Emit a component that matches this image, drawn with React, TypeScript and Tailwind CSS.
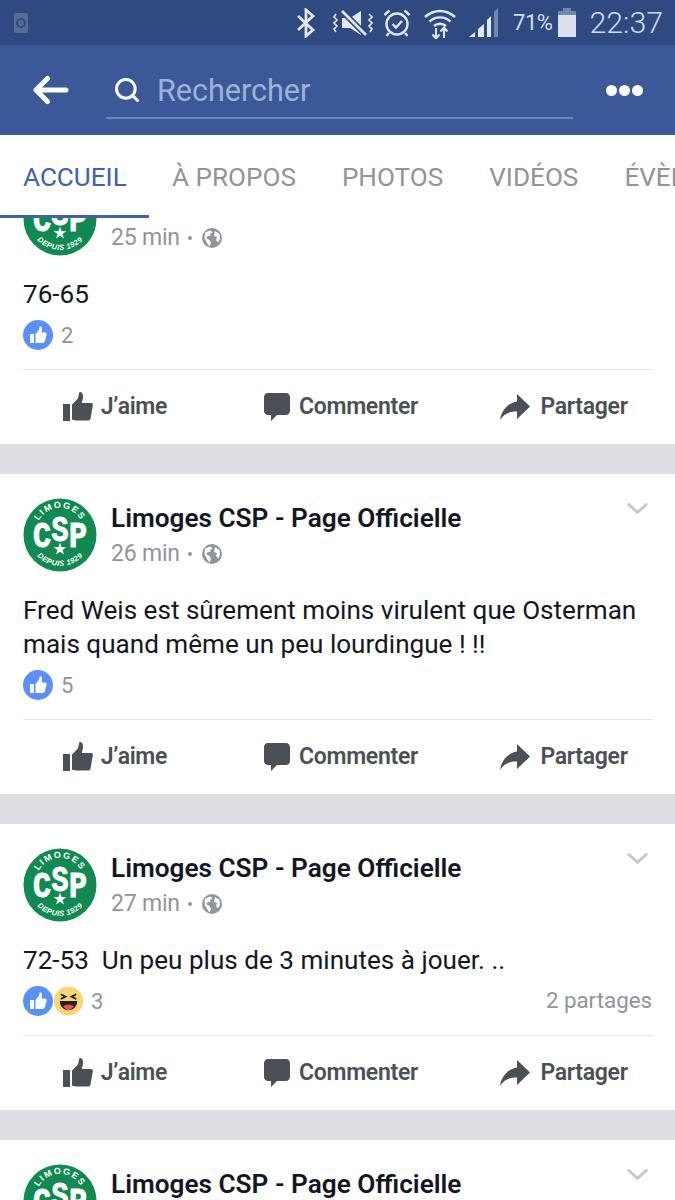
import { Search } from 'lucide-react';

function CspLogo() {
  return (
    <svg viewBox="0 0 74 74" className="h-[74px] w-[74px] shrink-0">
      <defs>
        <path id="arcTop" d="M13 34 A24 24 0 0 1 61 34" />
        <path id="arcBottom" d="M6 42 A31.500 31.500 0 0 0 68 42" />
      </defs>
      <circle cx="37" cy="37" r="36.500" fill="#0f8a50" />
      <text fontFamily="Liberation Sans, sans-serif" fontWeight="700" fontSize="9" fill="#fff" letterSpacing="1.500">
        <textPath href="#arcTop" startOffset="50%" textAnchor="middle">LIMOGES</textPath>
      </text>
      <g fontFamily="Liberation Mono, monospace" fontWeight="700" fontSize="36" fill="#fff" stroke="#fff" strokeWidth="1">
        <text x="10" y="49" textLength="18" lengthAdjust="spacingAndGlyphs">C</text>
        <text x="28.500" y="43" textLength="17" lengthAdjust="spacingAndGlyphs">S</text>
        <text x="46" y="49" textLength="18" lengthAdjust="spacingAndGlyphs">P</text>
      </g>
      <polygon points="37,44.500 38.500,49 43.500,49 39.500,52 41,56.500 37,53.800 33,56.500 34.500,52 30.500,49 35.500,49" fill="#fff" />
      <text fontFamily="Liberation Sans, sans-serif" fontWeight="700" fontStyle="italic" fontSize="7.500" fill="#fff" letterSpacing="0.400">
        <textPath href="#arcBottom" startOffset="50%" textAnchor="middle">DEPUIS 1929</textPath>
      </text>
    </svg>
  );
}

function Globe() {
  return (
    <svg viewBox="0 0 20 20" className="h-[20px] w-[20px]">
      <circle cx="10" cy="10" r="10" fill="#90949c" />
      <path d="M3 4.500L8.500 2.500 10.500 4.500 8 6l.5 2h-3l-1 2.500 3 1.500 1.500 3-1.500 3.500L5 15 2.500 10z" fill="#fff" />
      <path d="M13 3l4.500 3 .5 5-2 3.500-2-2.500 1-3-3-1z" fill="#fff" />
    </svg>
  );
}

function ThumbBlue() {
  return (
    <svg viewBox="0 0 30 30" className="relative z-10 h-[30px] w-[30px] shrink-0">
      <circle cx="15" cy="15" r="15" fill="#5890ff" />
      <path d="M7 14h4v9H7z M12.500 14l3-3.500c.8-1 .8-3 1.200-4.200 1.800-.3 2.600 1.500 2.300 3.500l-.5 2.700h3.500c1.400 0 2 1.200 1.600 2.300l-1.800 6.500c-.3 1-1 1.700-2 1.700h-7.300z" fill="#fff" />
    </svg>
  );
}

function LaughEmoji() {
  return (
    <svg viewBox="0 0 30 30" className="ml-px h-[30px] w-[29px] shrink-0">
      <ellipse cx="15" cy="15" rx="15" ry="15" fill="#f7d774" />
      <path d="M7 8l5 2.500-5 2.500M23 8l-5 2.500 5 2.500" fill="none" stroke="#1d2129" strokeWidth="1.800" />
      <path d="M6 15h18c0 5.500-4 9.500-9 9.500S6 20.500 6 15z" fill="#2a1c22" />
      <path d="M9.500 20.500c3-2 8-2 11 0-1.500 2.500-3.500 4-5.500 4s-4-1.500-5.500-4z" fill="#ed4f58" />
    </svg>
  );
}

function ActionThumb() {
  return (
    <svg viewBox="0 0 30 30" className="h-[30px] w-[30px] shrink-0" fill="#4b4f56">
      <path d="M0 12h7v17H0z" />
      <path d="M9 12.500l5.500-5.500c1-1.500 1-4.500 2-7 2.500-.5 4 2.500 3.500 6l-1.200 5H28c1.500 0 2 1.200 1.800 2.500l-2.300 13c-.3 1.500-1.200 2-2.500 2H13c-2 0-4-1-4-1z" />
    </svg>
  );
}

function ActionComment() {
  return (
    <svg viewBox="0 0 26 28" className="h-[28px] w-[26px] shrink-0" fill="#4b4f56">
      <path d="M4 0h18c2.200 0 4 1.800 4 4v14c0 2.200-1.800 4-4 4H13l-6 6v-6H4c-2.200 0-4-1.800-4-4V4c0-2.200 1.800-4 4-4z" />
    </svg>
  );
}

function ActionShare() {
  return (
    <svg viewBox="0 0 30 26" className="h-[30px] w-[30px] shrink-0" fill="#4b4f56">
      <path d="M17 0l13 12.500L17 25v-7.500C9 17.500 4 20 0 26c1.500-9.500 7.500-17 17-18.500z" />
    </svg>
  );
}

function Actions() {
  return (
    <div className="grid h-[74px] grid-cols-3 pl-[3px] text-[23px] font-semibold tracking-[-0.3px] text-[#4b4f56]">
      <div className="flex items-center justify-center gap-[8px]">
        <ActionThumb />
        <span>J’aime</span>
      </div>
      <div className="flex items-center justify-center gap-[9px] pl-[4px]">
        <ActionComment />
        <span>Commenter</span>
      </div>
      <div className="flex items-center justify-center gap-[10px] pl-[2px]">
        <ActionShare />
        <span>Partager</span>
      </div>
    </div>
  );
}

interface PostProps {
  time: string;
  lines: string[];
  likes: string;
  haha?: boolean;
  shares?: string;
}

function Post({ time, lines, likes, haha, shares }: PostProps) {
  return (
    <div className="mb-[30px] bg-white">
      <div className="relative flex gap-[14px] px-[23px] pt-[24px]">
        <CspLogo />
        <div className="pt-[5px]">
          <div className="text-[26.200px] leading-[30px] font-semibold whitespace-nowrap text-[#14171f]">Limoges CSP - Page Officielle</div>
          <div className="mt-[7px] flex items-center text-[23px] leading-[28px] tracking-[-0.2px] text-[#90949c]">
            <span>{time}</span>
            <span className="ml-[8px] h-[4px] w-[4px] rounded-full bg-[#90949c]" />
            <span className="ml-[10px]">
              <Globe />
            </span>
          </div>
        </div>
        <svg viewBox="0 0 22 12" className="absolute top-[28px] right-[27px] h-[12px] w-[21px]" fill="none" stroke="#c4c6cc" strokeWidth="3">
          <path d="M1 1.500l10 9 10-9" />
        </svg>
      </div>
      <div className="mt-[21px] px-[23px] text-[26.100px] leading-[34px] whitespace-pre text-[#14171f]">
        {lines.map((line) => (
          <div key={line}>{line}</div>
        ))}
      </div>
      <div className="mx-[23px] mt-[7px] flex h-[34px] items-center text-[22px] text-[#90949c]">
        <ThumbBlue />
        {haha && <LaughEmoji />}
        <span className="ml-[8px]">{likes}</span>
        {shares && <span className="ml-auto text-[22.300px]">{shares}</span>}
      </div>
      <div className="mx-[23px] mt-[17px] border-t border-[#e2e3e6]" />
      <Actions />
    </div>
  );
}

export default function App() {
  return (
    <div className="flex h-[1200px] w-[675px] flex-col overflow-hidden bg-[#dcdee3] font-['Roboto',sans-serif]">
      {/* status bar */}
      <div className="flex h-[45px] shrink-0 items-center bg-[#2e4a80] pr-[12px] pl-[14px] text-[#d5dbe8]">
        <div className="flex h-[20px] w-[14px] items-center justify-center rounded-[2px] bg-[#5a6c90]">
          <div className="h-[10px] w-[10px] rounded-full border-2 border-[#2e4a80]" />
        </div>
        <div className="ml-auto flex items-center">
          <svg viewBox="0 0 20 30" className="h-[30px] w-[20px]" fill="none" stroke="#e3e7f0" strokeWidth="2.800">
            <path d="M2 8l15 14-7 6V2l7 6L2 22" />
          </svg>
          <svg viewBox="0 0 40 28" className="ml-[17px] h-[28px] w-[40px]" fill="none" stroke="#e3e7f0" strokeWidth="1.600">
            <path d="M9 9h8l11-7v24l-11-7H9z" fill="#e3e7f0" stroke="none" />
            <path d="M9 2l24 24" stroke="#2e4a80" strokeWidth="6" />
            <path d="M9 2l24 24" strokeWidth="2.600" />
            <path d="M3 5L1 8l3 3-3 3 3 3-3 3 2 3M36 5l3 3-3 3 3 3-3 3 3 3-2 3" />
          </svg>
          <svg viewBox="0 0 28 30" className="ml-[10px] h-[30px] w-[28px]" fill="none" stroke="#e3e7f0" strokeWidth="2.400">
            <circle cx="14" cy="16" r="10.500" />
            <path d="M9.500 16l3.500 3.500 6-6.500M1.500 7l5-4.500M26.500 7l-5-4.500M6 25l-2.500 3M22 25l2.500 3" />
          </svg>
          <svg viewBox="0 0 32 32" className="ml-[13px] h-[32px] w-[32px]" fill="none" stroke="#e3e7f0" strokeWidth="2.400">
            <path d="M1 10c9-8 21-8 30 0M5.500 14.500c6-5.500 15-5.500 21 0M10 19c3.500-3 8.500-3 12 0" />
            <path d="M12 21v10M8.500 27.500l3.500 4 3.500-4M20 31V21M16.500 24.500l3.500-4 3.500 4" strokeWidth="2" />
          </svg>
          <svg viewBox="0 0 30 32" className="ml-[13px] h-[32px] w-[30px]">
            <path d="M0 30l6-5v5z" fill="#e3e7f0" />
            <path d="M9 30v-8l6-5v13z" fill="#e3e7f0" />
            <path d="M18 30V13l4-4v21z" fill="#e3e7f0" />
            <path d="M25 30V5l4-4v29z" fill="#7387ad" />
          </svg>
          <span className="ml-[14px] text-[22px] tracking-[-0.5px]">71%</span>
          <svg viewBox="0 0 20 30" className="ml-[5px] h-[30px] w-[20px]">
            <path d="M6 0h8v3h5v4H1V3h5z" fill="#7387ad" />
            <path d="M1 7h18v22H1z" fill="#dbe0ea" />
          </svg>
          <span className="mt-px ml-[12px] text-[30.300px] font-light">22:37</span>
        </div>
      </div>

      {/* search bar */}
      <div className="flex h-[90px] shrink-0 items-center bg-[#3b5998] pr-[32px] pl-[33px]">
        <svg viewBox="0 0 36 30" className="h-[30px] w-[36px]" fill="none" stroke="#fff" strokeWidth="5" strokeLinecap="round" strokeLinejoin="round">
          <path d="M33 15H4M14.500 3.500L3 15l11.500 11.500" />
        </svg>
        <div className="mt-[2px] ml-[37px] flex h-[56px] w-[467px] items-center border-b-2 border-[#6c87bb] pl-[7px]">
          <Search size={28} strokeWidth={2.6} className="text-white" />
          <span className="mt-px ml-[16px] text-[30.500px] text-[#9fb2d6]">Rechercher</span>
        </div>
        <div className="ml-auto flex gap-[2px]">
          <span className="h-[11px] w-[11px] rounded-full bg-white" />
          <span className="h-[11px] w-[11px] rounded-full bg-white" />
          <span className="h-[11px] w-[11px] rounded-full bg-white" />
        </div>
      </div>

      {/* tabs */}
      <div className="relative z-10 flex h-[83px] shrink-0 items-center overflow-hidden bg-white pt-[2px] text-[26.100px] whitespace-nowrap text-[#90949c]">
        <div className="relative flex h-full w-[149px] shrink-0 items-center pl-[23px] text-[#3f62ad]">
          ACCUEIL
          <div className="absolute right-0 bottom-0 left-0 h-[3px] bg-[#3f62ad]" />
        </div>
        <div className="ml-[23px] shrink-0">À PROPOS</div>
        <div className="ml-[46px] shrink-0">PHOTOS</div>
        <div className="ml-[46px] shrink-0">VIDÉOS</div>
        <div className="ml-[46px] shrink-0">ÉVÈNEMENTS</div>
      </div>

      {/* feed */}
      <div className="-mt-[60px]">
        <Post time="25 min" lines={['76-65']} likes="2" />
        <Post
          time="26 min"
          lines={['Fred Weis est sûrement moins virulent que Osterman', 'mais quand même un peu lourdingue ! !!']}
          likes="5"
        />
        <Post time="27 min" lines={['72-53  Un peu plus de 3 minutes à jouer. ..']} likes="3" haha shares="2 partages" />
        <Post time="28 min" lines={['']} likes="1" />
      </div>
    </div>
  );
}
